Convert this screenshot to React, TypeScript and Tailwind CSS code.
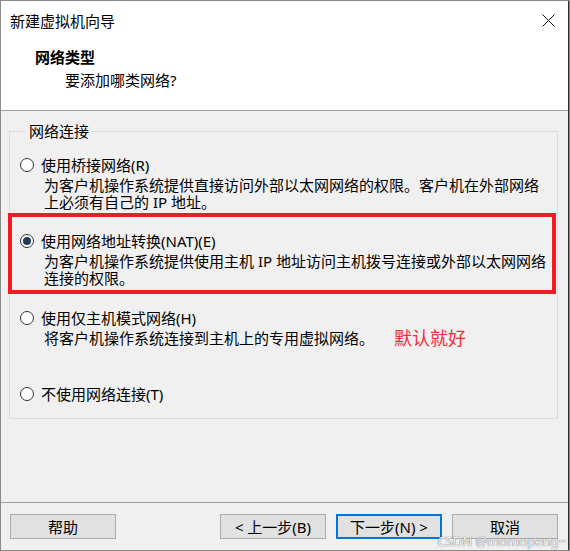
import React from "react";

function Radio({ checked }: { checked?: boolean }) {
  return (
    <span className="flex h-[14px] w-[14px] shrink-0 items-center justify-center rounded-full border border-[#333333] bg-white">
      {checked && <span className="h-[8px] w-[8px] rounded-full bg-[#1f3d5b]" />}
    </span>
  );
}

function Btn({ children, primary }: { children: React.ReactNode; primary?: boolean }) {
  return (
    <div
      className={
        primary
          ? "flex h-[25px] w-[106px] items-center justify-center border-2 border-[#0078d7] bg-[#e1e1e1] text-[15px] leading-[20px] text-black"
          : "flex h-[25px] w-[106px] items-center justify-center border border-[#adadad] bg-[#e1e1e1] text-[15px] leading-[20px] text-black"
      }
    >
      {children}
    </div>
  );
}

export default function App() {
  return (
    <div className="relative flex h-[551px] w-[570px] flex-col overflow-hidden border border-[#8a8a8a] bg-[#f0f0f0] font-['Noto_Sans','Noto_Sans_CJK_SC',sans-serif] text-black">
      {/* dark frame segments of the window edge */}
      <div className="absolute left-[204px] right-0 top-[-1px] h-[1px] bg-[#2d2d2d]" />
      <div className="absolute bottom-[-1px] left-[204px] right-0 h-[1px] bg-[#2d2d2d]" />
      <div className="absolute bottom-0 right-[-1px] top-0 w-[2px] bg-[#2d2d2d]" />

      {/* header */}
      <div className="flex h-[110px] flex-col border-b border-[#a0a0a0] bg-white">
        <div className="flex h-[39px] items-center justify-between pl-[9px] pr-[14px]">
          <span className="text-[15px] leading-[20px]">新建虚拟机向导</span>
          <svg width="13" height="13" viewBox="0 0 13 13" className="mt-[-1px]">
            <path d="M0.5 0.5 L12.5 12.5 M12.5 0.5 L0.5 12.5" stroke="#111" strokeWidth="1" fill="none" />
          </svg>
        </div>
        <div className="mt-[7px] pl-[34px] text-[15px] font-bold leading-[20px]">网络类型</div>
        <div className="mt-[3px] pl-[64px] text-[15px] leading-[20px]">要添加哪类网络?</div>
      </div>

      {/* body */}
      <div className="flex h-[392px] flex-col border-b border-[#a0a0a0]">
        <fieldset className="ml-[8px] mt-[10px] h-[298px] w-[549px] border border-[#dcdcdc] pl-[10px] pt-[14px]">
          <legend className="ml-[6px] px-[3px] text-[15px] leading-[20px]">网络连接</legend>

          <div className="flex h-[20px] items-center gap-[7px] text-[15px] leading-[20px]">
            <Radio />
            <span>使用桥接网络(R)</span>
          </div>
          <div className="mt-[2px] whitespace-nowrap pl-[24px] text-[15px] leading-[17px]">
            为客户机操作系统提供直接访问外部以太网网络的权限。客户机在外部网络
            <br />
            上必须有自己的 IP 地址。
          </div>

          <div className="mt-[20px] flex h-[20px] items-center gap-[7px] text-[15px] leading-[20px]">
            <Radio checked />
            <span>使用网络地址转换(NAT)(E)</span>
          </div>
          <div className="mt-[2px] whitespace-nowrap pl-[24px] text-[15px] leading-[17px]">
            为客户机操作系统提供使用主机 IP 地址访问主机拨号连接或外部以太网网络
            <br />
            连接的权限。
          </div>

          <div className="mt-[21px] flex h-[20px] items-center gap-[7px] text-[15px] leading-[20px]">
            <Radio />
            <span>使用仅主机模式网络(H)</span>
          </div>
          <div className="mt-[2px] flex h-[17px] items-center whitespace-nowrap pl-[24px] text-[15px] leading-[17px]">
            <span>将客户机操作系统连接到主机上的专用虚拟网络。</span>
            <span className="ml-[20px] text-[18px] leading-[17px] text-[#ef2f3b]">默认就好</span>
          </div>

          <div className="mt-[37px] flex h-[20px] items-center gap-[7px] text-[15px] leading-[20px]">
            <Radio />
            <span>不使用网络连接(T)</span>
          </div>
        </fieldset>
      </div>

      {/* footer */}
      <div className="flex flex-1 items-start pl-[9px] pr-[11px] pt-[11px]">
        <Btn>帮助</Btn>
        <div className="ml-auto flex gap-[10px]">
          <Btn>&lt; 上一步(B)</Btn>
          <Btn primary>下一步(N) &gt;</Btn>
          <Btn>取消</Btn>
        </div>
      </div>

      {/* red annotation box */}
      <div className="pointer-events-none absolute left-[7px] top-[212px] h-[81px] w-[548px] border-[4px] border-[#ee1c25]" />

      {/* watermark */}
      <div className="pointer-events-none absolute bottom-[1px] right-[3px] text-[13px] leading-[16px] text-[#f4f4f4] [text-shadow:0_0_1px_#777,0_0_1px_#777]">
        CSDN @momopeng~
      </div>
    </div>
  );
}
